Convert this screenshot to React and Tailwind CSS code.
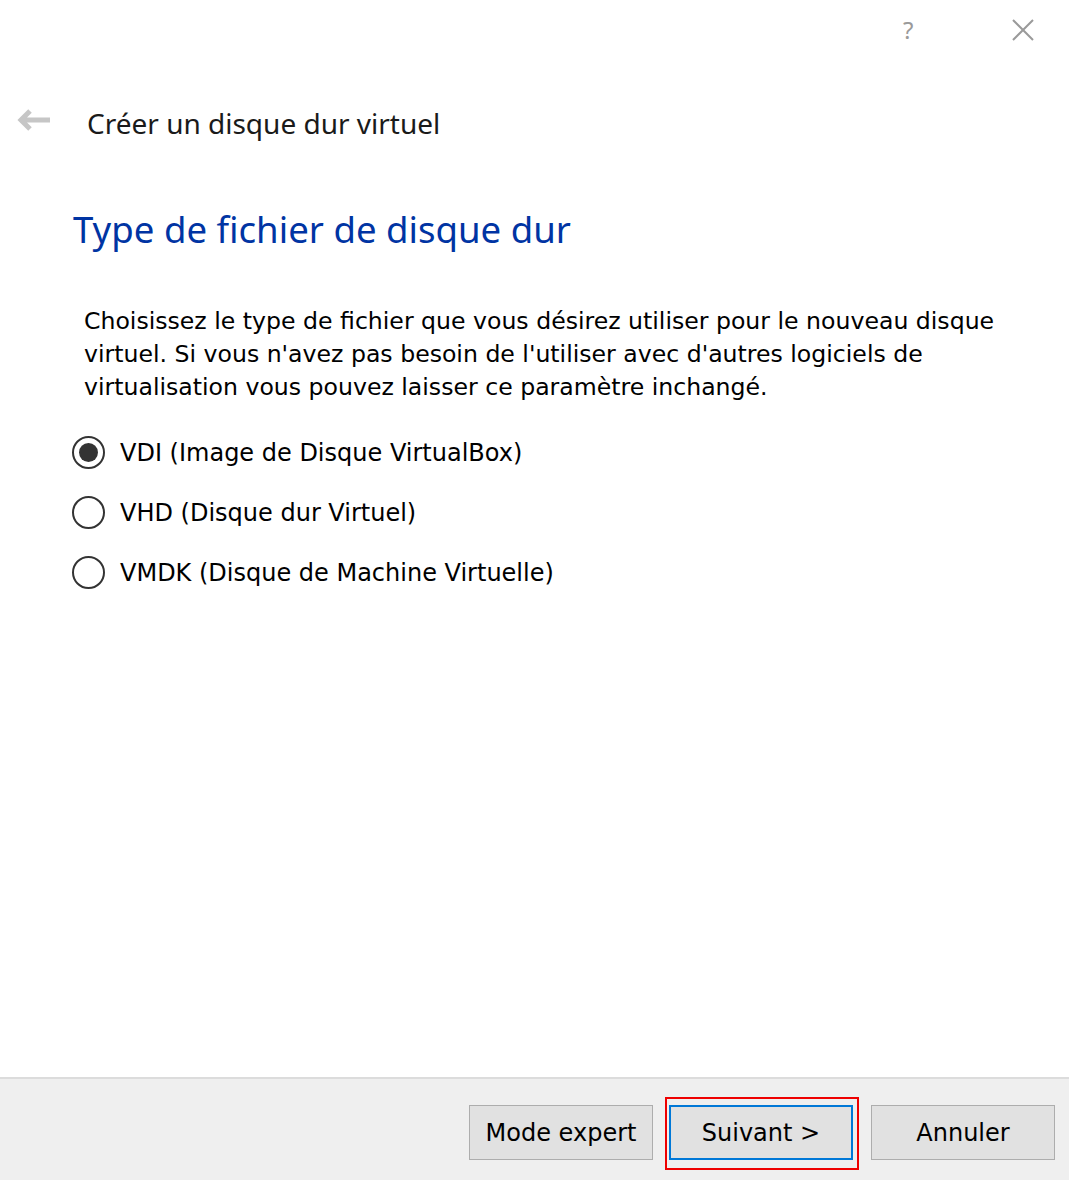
import React from "react";

const tahoma = { fontFamily: "Tahoma, 'DejaVu Sans', Verdana, sans-serif" };
const segoe = { fontFamily: "'Segoe UI', 'Noto Sans', 'Open Sans', sans-serif" };

function Radio({ checked, label }) {
  return (
    <div className="flex items-center h-[60px]">
      <div className="w-[33px] h-[33px] rounded-full border-2 border-[#333333] flex items-center justify-center bg-white ml-[72px]">
        {checked && <div className="w-[19px] h-[19px] rounded-full bg-[#333333]" />}
      </div>
      <span className="ml-[15px] text-[24px] text-black leading-none" style={tahoma}>{label}</span>
    </div>
  );
}

export default function App() {
  return (
    <div className="w-[1069px] h-[1180px] bg-white flex flex-col overflow-hidden">
      <div className="flex-1 flex flex-col">
        <div className="h-[60px] relative">
          <span className="absolute left-[903px] top-[12px] text-[24px] text-[#9a9a9a]" style={segoe}>?</span>
          <svg className="absolute left-[1012px] top-[19px]" width="22" height="22" viewBox="0 0 22 22">
            <path d="M1 1 L21 21 M21 1 L1 21" stroke="#9a9a9a" strokeWidth="2" fill="none" />
          </svg>
        </div>
        <div className="flex items-center h-[64px] pl-[17px] mt-[31px]">
          <svg className="-mt-[6px]" width="33" height="22" viewBox="0 0 33 22">
            <path d="M33 11 H5 M13 2 L4 11 L13 20" stroke="#c6c6c6" strokeWidth="5" fill="none" />
          </svg>
          <span className="ml-[37px] text-[28px] text-[#1a1a1a]" style={segoe}>Créer un disque dur virtuel</span>
        </div>
        <div className="pl-[73px] mt-[53px] text-[36.6px] text-[#0034a3] leading-[1.2]" style={segoe}>Type de fichier de disque dur</div>
        <div className="ml-[84px] w-[950px] mt-[53px] text-[23.6px] leading-[33px] text-black" style={tahoma}>
          Choisissez le type de fichier que vous désirez utiliser pour le nouveau disque virtuel. Si vous n'avez pas besoin de l'utiliser avec d'autres logiciels de virtualisation vous pouvez laisser ce paramètre inchangé.
        </div>
        <div className="mt-[19px] flex flex-col">
          <Radio checked label="VDI (Image de Disque VirtualBox)" />
          <Radio label="VHD (Disque dur Virtuel)" />
          <Radio label="VMDK (Disque de Machine Virtuelle)" />
        </div>
      </div>
      <div className="h-[103px] bg-[#efefef] border-t-2 border-[#dcdcdc] flex items-start justify-end pr-[14px] pt-[26px] gap-[12px]" style={tahoma}>
        <button className="w-[184px] h-[55px] bg-[#e1e1e1] border border-[#adadad] text-[24px] text-black">Mode expert</button>
        <div className="border-2 border-[#ee0000] pl-[2px] pr-[4px] pt-[6px] pb-[8px] -mt-[8px]">
          <button className="w-[184px] h-[55px] bg-[#e1e1e1] border-2 border-[#0078d7] text-[24px] text-black">Suivant &gt;</button>
        </div>
        <button className="w-[184px] h-[55px] bg-[#e1e1e1] border border-[#adadad] text-[24px] text-black">Annuler</button>
      </div>
    </div>
  );
}
